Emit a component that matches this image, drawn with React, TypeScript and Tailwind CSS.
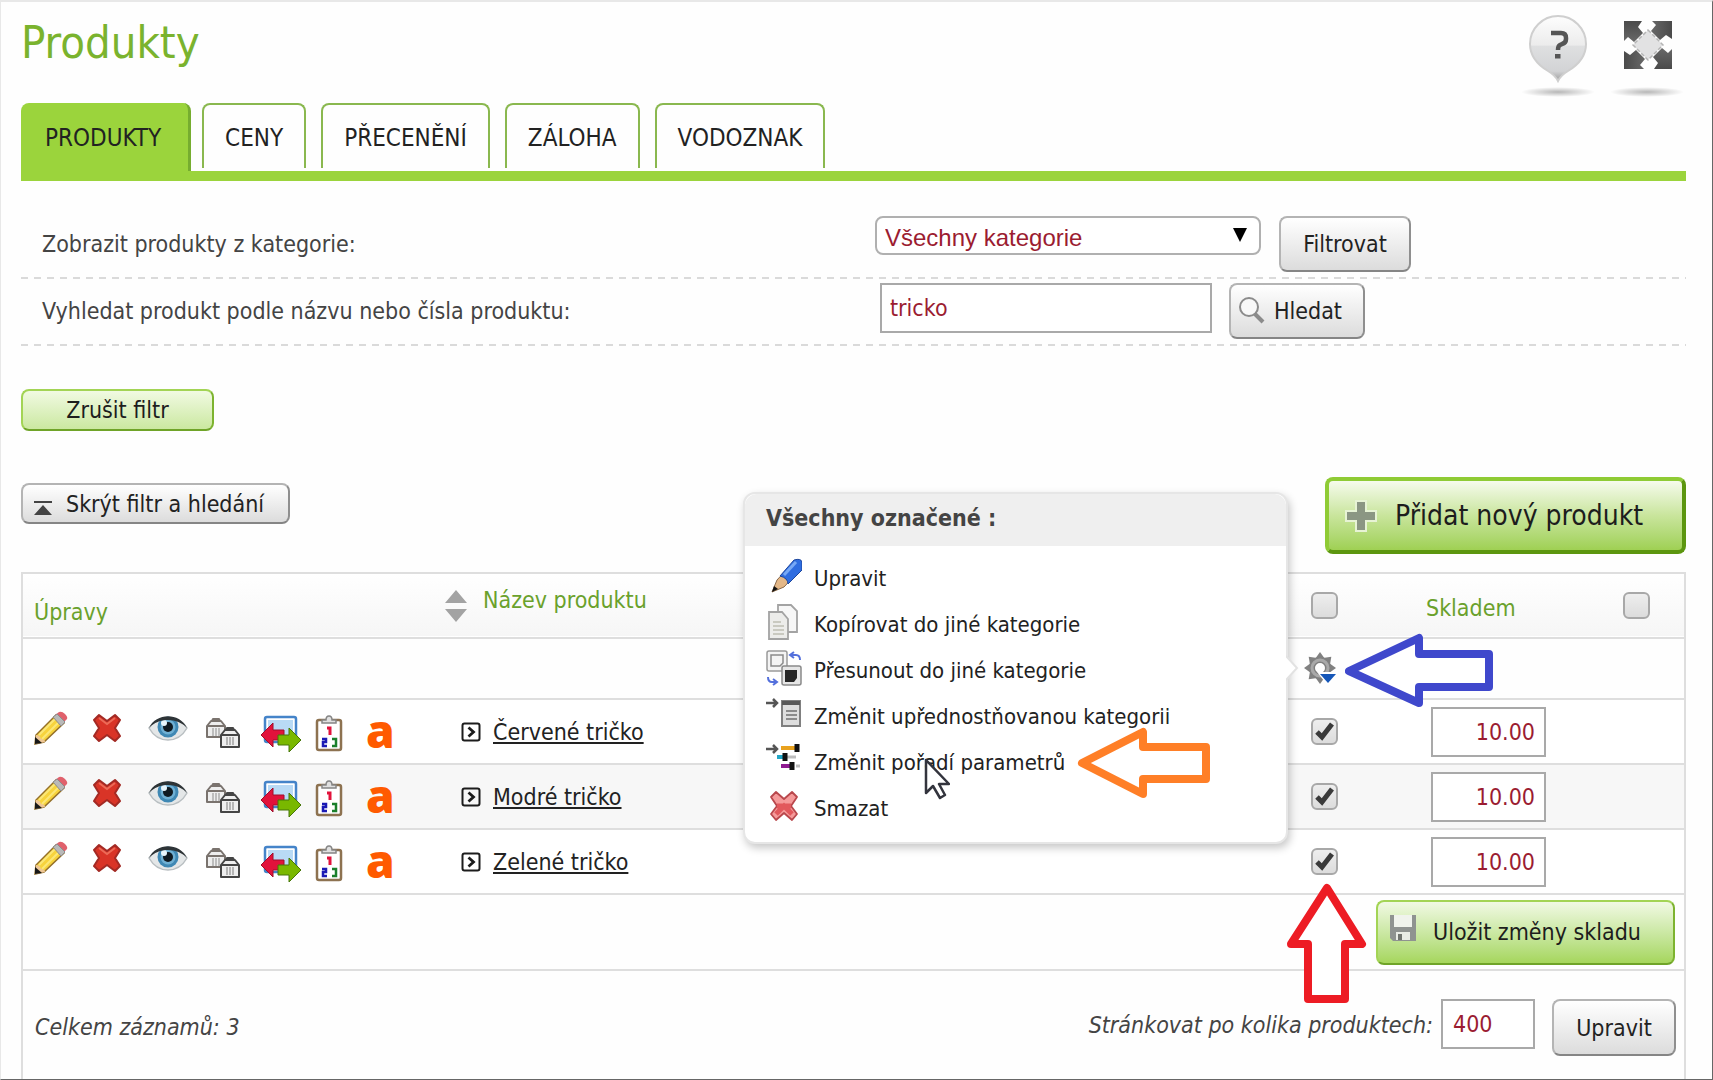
import React from "react";

interface Product {
  id: number;
  name: string;
  stock: string;
}

const tabs = ["PRODUKTY", "CENY", "PŘECENĚNÍ", "ZÁLOHA", "VODOZNAK"];

const products: Product[] = [
  { id: 1, name: "Červené tričko", stock: "10.00" },
  { id: 2, name: "Modré tričko", stock: "10.00" },
  { id: 3, name: "Zelené tričko", stock: "10.00" },
];

const grayButton =
  "rounded-lg border-2 border-[#b4b4b4] border-r-[#8f8f8f] border-b-[#858585] bg-linear-to-b from-white to-[#dcdcdc] text-[#222] whitespace-nowrap";
const greenButton =
  "rounded-lg border-2 border-[#a3d455] border-r-[#7db32f] border-b-[#6fa428] bg-linear-to-b whitespace-nowrap text-[#1d1d1d]";
const field = "border-2 border-[#a9a9a9] bg-white text-[#9b1c31]";

/* Header icons */

const HelpIcon = () => (
  <svg width="76" height="84" viewBox="0 0 76 84">
    <defs>
      <linearGradient id="pin" x1="0" y1="0" x2="0" y2="1">
        <stop offset="0" stopColor="#fdfdfd" />
        <stop offset="0.45" stopColor="#ececec" />
        <stop offset="0.46" stopColor="#dfe0e1" />
        <stop offset="0.85" stopColor="#d2d3d5" />
        <stop offset="1" stopColor="#9c9c9c" />
      </linearGradient>
      <radialGradient id="shade">
        <stop offset="0" stopColor="#000" stopOpacity="0.28" />
        <stop offset="1" stopColor="#000" stopOpacity="0" />
      </radialGradient>
    </defs>
    <path d="M38 2a28 28 0 0 1 28 28c0 13-8 21-18 27-5 3-8 6-10 10-2-4-5-7-10-10C18 51 10 43 10 30A28 28 0 0 1 38 2z" fill="url(#pin)" stroke="#cfcfcf" strokeWidth="2" />
    <path d="M31 19h10q5 0 5 5v1q0 4-4 5l-2 1q-2 1-2 5" fill="none" stroke="#555" strokeWidth="4.500" />
    <rect x="35" y="40" width="5.500" height="4.500" fill="#555" />
    <ellipse cx="38" cy="78" rx="37" ry="5" fill="url(#shade)" />
  </svg>
);

const ExpandIcon = () => (
  <svg width="76" height="84" viewBox="0 0 76 84">
    <defs>
      <linearGradient id="exp" x1="0" y1="0" x2="0" y2="1">
        <stop offset="0" stopColor="#4a4a4a" />
        <stop offset="1" stopColor="#686868" />
      </linearGradient>
    </defs>
    <path d="M38 16 53 31 38 46 23 31z" fill="#e2e2e3" stroke="#b4b4b4" strokeWidth="1.500" strokeDasharray="4 2" />
    {[0, 90, 180, 270].map((r) => (
      <path key={r} transform={`rotate(${r} 38 31)`} d="M14 7h18l-4 6 5 6-9 9-6-5-4 4z" fill="url(#exp)" />
    ))}
    <ellipse cx="37" cy="78" rx="37" ry="5" fill="url(#shade)" />
  </svg>
);

/* Row action icons */

const PencilIcon = () => (
  <svg width="34" height="34" viewBox="0 0 34 34">
    <path d="M1 33 2 24 22 4l8 8-20 19z" fill="#f7d33c" stroke="#94702a" strokeWidth="1.500" />
    <path d="M5 24 23 6M8 28 27 9" stroke="#fbe777" strokeWidth="2" />
    <path d="m21 4 4-3q3-1 6 2t2 5l-4 4z" fill="#e0616c" />
    <path d="m19 6 4-3 8 8-4 4z" fill="#b9b9b9" stroke="#8c8c8c" />
    <path d="M1 33 2 24q4 0 5 4 4 0 4 3z" fill="#eec797" />
    <path d="M1 33v-7l7 6z" fill="#181818" />
  </svg>
);

const DeleteIcon = () => (
  <svg width="30" height="30" viewBox="0 0 30 30">
    <path d="m7 2 8 6 8-6 5 5-5 8 5 8-5 5-8-6-8 6-5-5 5-8-5-8z" fill="#d93427" stroke="#a32a24" strokeWidth="2" strokeLinejoin="round" />
    <path d="m7 5 8 6 8-6" fill="none" stroke="#ec6a57" strokeWidth="2" />
  </svg>
);

const EyeIcon = () => (
  <svg width="40" height="30" viewBox="0 0 40 30">
    <path d="M1 15C8 3 31 1 39 15 30 31 10 31 1 15z" fill="#e4e7e8" stroke="#b9bfc2" strokeWidth="1.500" />
    <circle cx="20" cy="14" r="10.500" fill="#3f88b4" />
    <circle cx="20" cy="14" r="7.500" fill="#6fb0d4" />
    <circle cx="20" cy="14" r="5" fill="#0f1a22" />
    <circle cx="16" cy="10" r="3" fill="#e7f5fc" />
    <path d="M1 15C8 0 31-1 39 15 30 5 11 4 1 15z" fill="#2e3437" />
  </svg>
);

const BoxesIcon = () => (
  <svg width="36" height="32" viewBox="0 0 36 32" fill="#eeeeee" strokeLinejoin="round">
    <g stroke="#7a736e" strokeWidth="2">
      <path d="m2 8 4-5h10l4 5v11H2zM2 8h18M7 3l1-2h6l1 2" />
      <path d="M8 10v8M11 10v8M14 10v8" stroke="#bdbdbd" />
    </g>
    <g stroke="#454545" strokeWidth="2">
      <path d="m16 17 4-5h10l4 5v12H16zM16 17h18M21 12l1-2h6l1 2" />
      <path d="M22 19v8M25 19v8M28 19v8" stroke="#b5b5b5" />
    </g>
  </svg>
);

const SwapImageIcon = () => (
  <svg width="42" height="38" viewBox="0 0 42 38">
    <rect x="5" y="2" width="31" height="25" rx="2" fill="#fff" stroke="#4584c9" strokeWidth="2.500" />
    <rect x="8" y="5" width="25" height="19" fill="#b9daf5" />
    <path d="m1 20 12-12v7h11v10H13v7z" fill="#e2123b" stroke="#a00f2c" />
    <path d="M41 25 29 37v-7H18V20h11v-7z" fill="#79b800" stroke="#47760a" />
  </svg>
);

const ClipboardIcon = () => (
  <svg width="28" height="37" viewBox="0 0 28 37">
    <rect x="2" y="5" width="24" height="30" rx="2" fill="#fff" stroke="#8d7250" strokeWidth="2.500" />
    <path d="M7 8V5h4q0-4 3-4t3 4h4v3z" fill="#e0e0e0" stroke="#858585" strokeWidth="1.500" />
    <path d="M12 13h3v7" fill="none" stroke="#e2123b" strokeWidth="3" />
    <path d="M7 24h4v3H8v4h4" fill="none" stroke="#1a1ab5" strokeWidth="2.500" />
    <path d="M17 24h4v7h-4" fill="none" stroke="#1a7f2b" strokeWidth="2.500" />
  </svg>
);

const ArrowBoxIcon = () => (
  <svg width="20" height="20" viewBox="0 0 20 20" fill="none" stroke="#1c1c1c">
    <rect x="1.500" y="1.500" width="17" height="17" rx="2" strokeWidth="2" />
    <path d="m7.500 5.500 5 4.500-5 4.500" strokeWidth="2.800" />
  </svg>
);

const rowActions = [
  { label: "Upravit", icon: <PencilIcon />, cell: "w-[34px] mb-2" },
  { label: "Smazat", icon: <DeleteIcon />, cell: "w-[30px] ml-6 mb-2" },
  { label: "Zobrazit", icon: <EyeIcon />, cell: "w-[40px] ml-[26px] mb-2" },
  { label: "Varianty", icon: <BoxesIcon />, cell: "w-[36px] ml-[17px] mt-1" },
  { label: "Obrázky", icon: <SwapImageIcon />, cell: "w-[42px] ml-[19px] mt-1" },
  { label: "Pořadí", icon: <ClipboardIcon />, cell: "w-[28px] ml-[13px] mt-1" },
];

/* Menu icons, all 36px wide */

const BluePencilIcon = () => (
  <svg width="36" height="36" viewBox="0 0 36 36">
    <path d="M6 34 11 22 24 8l7 7-13 14z" fill="#e3b787" stroke="#8a6a4b" />
    <path d="M14 18 28 2q7-2 8 2v8L22 26q0-6-8-8z" fill="#2f6de0" stroke="#1d469d" />
    <path d="M18 17 30 4" stroke="#78a9f5" strokeWidth="3" />
    <path d="m6 34 2-6 4 3z" fill="#111" />
  </svg>
);

const CopyIcon = () => (
  <svg width="36" height="36" viewBox="0 0 36 36" stroke="#a3a3a3" strokeWidth="1.800">
    <path d="M12 1h13l6 6v21H12z" fill="#f7f7f7" />
    <path d="M3 8h13l6 7v20H3z" fill="#ececea" />
    <path d="M7 18h8M7 22h11M7 26h11M7 30h11" stroke="#c9c9c0" />
  </svg>
);

const MoveIcon = () => (
  <svg width="36" height="36" viewBox="0 0 36 36" fill="none">
    <rect x="1" y="1" width="20" height="20" rx="2" fill="#f4f4f4" stroke="#9a9a9a" strokeWidth="1.500" />
    <path d="M5 5h12v8l-3 3H5z" stroke="#8a8a8a" strokeWidth="1.500" />
    <rect x="16" y="16" width="19" height="19" rx="2" fill="#e6e6e6" stroke="#8a8a8a" strokeWidth="1.500" />
    <path d="M19 20h12v8l-3 4h-9z" fill="#262626" />
    <path d="M25 5h5q4 0 4 5M28 2l-4 3 4 3M2 27q0 5 4 5h4M7 29l4 3-4 3" stroke="#5470dc" strokeWidth="2" />
  </svg>
);

const PreferIcon = () => (
  <svg width="36" height="36" viewBox="0 0 36 36" fill="none">
    <path d="M0 7h11M7 3l4 4-4 4" stroke="#555" strokeWidth="2.500" />
    <rect x="16" y="5" width="18" height="25" fill="#dedede" stroke="#808080" strokeWidth="2" />
    <path d="M16 7h18" stroke="#595959" strokeWidth="4" />
    <path d="M20 15h11M20 19h11M20 23h11" stroke="#8b8b8b" strokeWidth="2" />
  </svg>
);

const ParamsIcon = () => (
  <svg width="36" height="36" viewBox="0 0 36 36" fill="none">
    <path d="M0 7h11M7 3l4 4-4 4" stroke="#555" strokeWidth="2.500" />
    <path d="M15 6h18" stroke="#e9a21f" strokeWidth="4" />
    <path d="M11 15h9" stroke="#22a6c6" strokeWidth="4" />
    <path d="M20 15h10M30 24h4" stroke="#bdbdbd" strokeWidth="3" />
    <path d="M15 24h12" stroke="#8f1a91" strokeWidth="4" />
    <path d="M31 2v8M19 11v8M26 20v8" stroke="#111" strokeWidth="5" />
  </svg>
);

const RemoveIcon = () => (
  <svg width="36" height="36" viewBox="0 0 36 36">
    <path d="m10 4 8 7 8-7 5 5-6 9 6 8-5 6-8-7-8 7-5-6 6-8-6-9z" fill="#f59a9a" stroke="#b9474c" strokeWidth="1.800" strokeLinejoin="round" />
    <path d="m10 26 8-8 8 8M11 18h14" fill="none" stroke="#e2585c" strokeWidth="5" />
  </svg>
);

const menuItems = [
  { label: "Upravit", icon: <BluePencilIcon /> },
  { label: "Kopírovat do jiné kategorie", icon: <CopyIcon /> },
  { label: "Přesunout do jiné kategorie", icon: <MoveIcon /> },
  { label: "Změnit upřednostňovanou kategorii", icon: <PreferIcon /> },
  { label: "Změnit pořadí parametrů", icon: <ParamsIcon />, highlighted: true },
  { label: "Smazat", icon: <RemoveIcon /> },
];

const GearIcon = () => (
  <svg width="34" height="34" viewBox="0 0 34 34">
    <g fill="#808080">
      {[0, 45, 90, 135, 180, 225, 270, 315].map((r) => (
        <path key={r} transform={`rotate(${r} 16 16)`} d="m11 7 5-7 5 7z" />
      ))}
    </g>
    <circle cx="16" cy="16" r="8" fill="#fff" stroke="#808080" strokeWidth="6" />
    <circle cx="16" cy="16" r="8" fill="none" stroke="#a9a9a9" strokeWidth="3" />
    <path d="M13 20h21L24 34z" fill="#fff" />
    <path d="M16 22h16l-8 9z" fill="#1556b8" />
  </svg>
);

/* Marker arrows drawn over the page */

const LeftArrow = ({ color }: { color: string }) => (
  <svg width="148" height="76" viewBox="0 0 148 76" fill="#fff" stroke={color} strokeWidth="8" strokeLinejoin="round">
    <path d="M4 38 74 5v16h70v33H74v16z" />
  </svg>
);

const LeftArrowSmall = ({ color }: { color: string }) => (
  <svg width="134" height="72" viewBox="0 0 134 72" strokeWidth="8" strokeLinejoin="round" stroke={color} fill="#fff">
    <path d="M5 36 66 5v15h63v32H66v15z" />
  </svg>
);

const UpArrow = ({ color }: { color: string }) => (
  <svg width="82" height="122" viewBox="0 0 82 122" strokeWidth="8" strokeLinejoin="round" stroke={color} fill="#fff">
    <path d="M41 5 76 61H59v55H22V61H5z" />
  </svg>
);

const Cursor = () => (
  <svg width="26" height="42" viewBox="0 0 26 42">
    <path d="M2 2v33l7-7 7 12 5-3-6-11h10z" fill="#fff" stroke="#33343d" strokeWidth="2.500" strokeLinejoin="round" />
  </svg>
);

const CheckBox = ({ label, checked = false }: { label: string; checked?: boolean }) => (
  <label className="relative block size-[27px]">
    <input
      type="checkbox"
      aria-label={label}
      defaultChecked={checked}
      className="peer block size-full appearance-none rounded-md border-2 border-[#a8a8a8] bg-linear-to-b from-[#eeeeee] to-[#dcdcdc]"
    />
    <svg viewBox="0 0 27 27" className="pointer-events-none absolute inset-0 hidden peer-checked:block">
      <path d="m6 14 5 5L21 6" fill="none" stroke="#3a3a3a" strokeWidth="5" />
    </svg>
  </label>
);

const ActionMenu = () => (
  <div className="absolute top-[-147px] right-[91px] z-10 w-[545px] rounded-xl border-2 border-[#e6e6e6] bg-white text-left shadow-[2px_4px_8px_rgba(0,0,0,0.22)]">
    <div className="rounded-t-xl bg-[#efefef] px-[21px] pt-[10px] pb-[14px] text-[23px] leading-7 font-bold text-[#444]">
      Všechny označené :
    </div>
    <ul className="px-[21px] pt-[10px] pb-[10px]">
      {menuItems.map((item) => (
        <li key={item.label} className="relative">
          <button className="flex h-[46px] items-center gap-3 text-[22px] whitespace-nowrap text-[#222]">
            <span className="mb-[6px]">{item.icon}</span>
            {item.label}
          </button>
          {item.highlighted && (
            <>
              <span className="absolute top-[18px] left-[158px]">
                <Cursor />
              </span>
              <span className="absolute top-[-13px] left-[311px]">
                <LeftArrowSmall color="#ff7f27" />
              </span>
            </>
          )}
        </li>
      ))}
    </ul>
    <svg width="14" height="28" viewBox="0 0 14 28" className="absolute top-[160px] left-full">
      <path d="M0 2 11 14 0 26" fill="#fff" stroke="#e2e2e2" strokeWidth="2" />
    </svg>
  </div>
);

export default function App() {
  return (
    <div className="flex min-h-screen flex-col overflow-hidden border-t-2 border-r border-b border-l border-t-[#e8e8e8] border-r-[#666] border-b-[#666] border-l-[#e8e8e8] bg-[#fefefe] pr-[26px] pl-5 font-['DejaVu_Sans_Condensed','Noto_Sans',sans-serif] text-[23px] leading-8 text-[#444]">
      <header className="flex h-[101px] items-start justify-between">
        <h1 className="pt-3 text-[45px] leading-[58px] text-[#7ab32e]">Produkty</h1>
        <div className="flex gap-[14px] pt-3">
          <button aria-label="Nápověda">
            <HelpIcon />
          </button>
          <button aria-label="Celá obrazovka">
            <ExpandIcon />
          </button>
        </div>
      </header>

      <nav className="flex border-b-10 border-[#9bd43c] text-2xl">
        {tabs.map((tab, i) =>
          i === 0 ? (
            <a key={tab} href="#" className="mr-[11px] h-[68px] rounded-t-lg border-r-3 border-[#76ad2f] bg-[#9bd43c] pr-[27px] pl-6 leading-[70px] text-[#222]">
              {tab}
            </a>
          ) : (
            <a key={tab} href="#" className="mr-[15px] mb-[3px] h-[65px] rounded-t-lg border-2 border-b-0 border-[#8ab84f] px-[21px] leading-[67px] text-[#222]">
              {tab}
            </a>
          )
        )}
      </nav>

      <form>
        <div className="flex items-start pt-[35px] pb-[5px]">
          <label htmlFor="category" className="w-[854px] shrink pt-3 pl-[21px]">
            Zobrazit produkty z kategorie:
          </label>
          <div className="relative mr-[18px]">
            <select id="category" className="h-[39px] w-[386px] appearance-none rounded-lg border-2 border-[#b0b0b0] bg-white pt-1 pl-2 font-['Liberation_Sans',sans-serif] text-2xl text-[#9b1c31]">
              <option>Všechny kategorie</option>
            </select>
            <svg width="14" height="14" viewBox="0 0 14 14" className="pointer-events-none absolute top-3 right-[14px]">
              <path d="M0 0h14L7 14z" fill="#000" />
            </svg>
          </div>
          <button type="button" className={`h-14 w-[132px] ${grayButton}`}>Filtrovat</button>
        </div>
        <div className="h-[2px] bg-[repeating-linear-gradient(90deg,#dadada_0_7px,transparent_7px_13px)]" />
        <div className="flex items-start pt-1 pb-[5px]">
          <label htmlFor="search" className="w-[859px] shrink pt-3 pl-[21px]">
            Vyhledat produkt podle názvu nebo čísla produktu:
          </label>
          <input id="search" type="text" defaultValue="tricko" className={`mr-[17px] h-[50px] w-[332px] px-2 ${field}`} />
          <button type="button" className={`flex h-14 w-[136px] items-center gap-2 pl-[7px] ${grayButton}`}>
            <svg width="28" height="28" viewBox="0 0 28 28" fill="none" stroke="#8b8b8b" className="shrink-0">
              <circle cx="11" cy="10" r="9" strokeWidth="2" fill="#f8f8f8" />
              <path d="m17 17 8 8" strokeWidth="4" />
            </svg>
            Hledat
          </button>
        </div>
        <div className="h-[2px] bg-[repeating-linear-gradient(90deg,#dadada_0_7px,transparent_7px_13px)]" />
      </form>

      <button className={`mt-[43px] h-[42px] w-[193px] self-start ${greenButton} from-[#f1fae2] to-[#cbe8a0]`}>
        Zrušit filtr
      </button>

      <div className="mt-[46px] flex items-start justify-between">
        <button className={`mt-[6px] flex h-[41px] w-[269px] items-center gap-[14px] pl-[11px] ${grayButton}`}>
          <svg width="18" height="14" viewBox="0 0 18 14" fill="#444" className="mt-2 shrink-0">
            <path d="M0 0h18v2H0zM9 4l9 10H0z" />
          </svg>
          Skrýt filtr a hledání
        </button>
        <button className="flex h-[77px] w-[361px] items-center gap-[17px] rounded-lg border-4 border-[#8fcb35] border-r-[#5c960f] border-b-[#5c960f] bg-linear-to-b from-[#f6fbec] via-[#c9e59c] to-[#9fd053] pl-[15px] text-[28px] whitespace-nowrap text-[#1d1d1d]">
          <svg width="34" height="34" viewBox="0 0 34 34" className="shrink-0">
            <path d="M12 2h10v10h10v10H22v10H12V22H2V12h10z" fill="#8b9683" stroke="#e7f3d5" strokeWidth="2" />
          </svg>
          Přidat nový produkt
        </button>
      </div>

      <table className="mt-[18px] w-full table-fixed border-collapse border-2 border-[#dedede]">
        <colgroup>
          <col className="w-[418px]" />
          <col />
          <col className="w-[108px]" />
          <col className="w-[184px]" />
          <col className="w-[122px]" />
        </colgroup>
        <thead>
          <tr className="h-[65px] border-b-2 border-[#dedede] bg-linear-to-b from-white to-[#f6f6f6] text-left text-[#6aa12c]">
            <th className="pt-3 pl-[11px] font-normal">Úpravy</th>
            <th className="font-normal">
              <div className="flex items-center gap-4 pl-[5px]">
                <svg width="22" height="32" viewBox="0 0 22 32" fill="#a3a3a3">
                  <path d="m11 0 11 13H0zM11 32 0 19h22z" />
                </svg>
                <span className="-mt-3">Název produktu</span>
              </div>
            </th>
            <th className="pl-10">
              <CheckBox label="Označit vše" />
            </th>
            <th className="pt-1 pl-[47px] font-normal">Skladem</th>
            <th className="pl-[60px]">
              <CheckBox label="Označit vše skladem" />
            </th>
          </tr>
        </thead>
        <tbody>
          <tr className="h-[61px] border-b-2 border-[#dedede]">
            <td colSpan={2} />
            <td className="relative pl-[33px]">
              <button aria-label="Akce s označenými" className="block">
                <GearIcon />
              </button>
              <ActionMenu />
              <span className="absolute top-[-6px] left-[74px]">
                <LeftArrow color="#3f48cc" />
              </span>
            </td>
            <td />
            <td />
          </tr>
          {products.map((product) => (
            <tr key={product.id} className="h-[65px] border-b-2 border-[#dedede] even:bg-white odd:bg-[#f7f7f7]">
              <td className="pl-[11px]">
                <div className="flex items-center">
                  {rowActions.map((action) => (
                    <button key={action.label} aria-label={action.label} className={action.cell}>
                      {action.icon}
                    </button>
                  ))}
                  <a href="#" className="mb-1 ml-[23px] font-['Open_Sans',sans-serif] text-[46px] leading-10 font-extrabold text-[#ff5a00]">
                    a
                  </a>
                </div>
              </td>
              <td>
                <div className="flex items-center gap-3 pl-[21px]">
                  <ArrowBoxIcon />
                  <a href="#" className="text-[#222] underline decoration-2 underline-offset-2">
                    {product.name}
                  </a>
                </div>
              </td>
              <td className="relative pl-10">
                <CheckBox label={product.name} checked />
                {product.id === 3 && (
                  <span className="absolute top-[53px] left-[15px]">
                    <UpArrow color="#ed1c24" />
                  </span>
                )}
              </td>
              <td className="pl-[52px]">
                <input type="text" aria-label={`Skladem ${product.name}`} defaultValue={product.stock} className={`block h-[50px] w-[115px] px-[9px] text-right ${field}`} />
              </td>
              <td />
            </tr>
          ))}
          <tr className="h-[76px] border-b-2 border-[#dedede]">
            <td colSpan={5} className="pr-[9px]">
              <button className={`ml-auto flex h-[65px] w-[299px] items-center gap-4 pl-[11px] ${greenButton} from-[#f1f9e3] to-[#a6d65c]`}>
                <svg width="28" height="28" viewBox="0 0 28 28" className="mb-2 shrink-0">
                  <path d="M1 1h26v26H4l-3-3z" fill="#8f9390" />
                  <path d="M5 1h18v12H5z" fill="#f0f3ec" />
                  <path d="M7 18h14v8H7z" fill="#e9ece5" />
                  <path d="M9 20h4v6H9z" fill="#71756f" />
                </svg>
                Uložit změny skladu
              </button>
            </td>
          </tr>
        </tbody>
      </table>

      <footer className="flex flex-1 items-start border-x-2 border-[#dedede] pt-7 pr-2 pl-3">
        <p className="mt-3 italic">Celkem záznamů: 3</p>
        <label htmlFor="page-size" className="mt-[10px] ml-auto italic">
          Stránkovat po kolika produktech:
        </label>
        <input id="page-size" type="text" defaultValue="400" className={`mr-[17px] ml-2 h-[50px] w-[94px] px-[10px] ${field}`} />
        <button className={`h-[57px] w-[124px] ${grayButton}`}>Upravit</button>
      </footer>
    </div>
  );
}
